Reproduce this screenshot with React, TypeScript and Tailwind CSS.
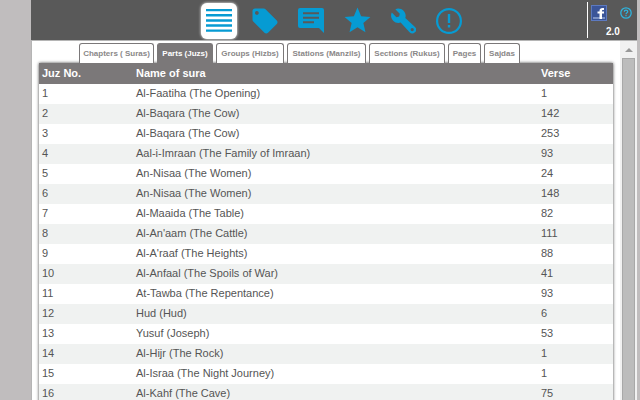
import { MdLocalOffer, MdStar } from "react-icons/md";

const tabs = [
  { label: "Chapters ( Suras)", width: "w-[75px]" },
  { label: "Parts (Juzs)", width: "w-14" },
  { label: "Groups (Hizbs)", width: "w-[68px]" },
  { label: "Stations (Manzils)", width: "w-[79px]" },
  { label: "Sections (Rukus)", width: "w-[76px]" },
  { label: "Pages", width: "w-[33px]" },
  { label: "Sajdas", width: "w-9" },
];

const juzs = [
  { sura: "Al-Faatiha (The Opening)", verse: 1 },
  { sura: "Al-Baqara (The Cow)", verse: 142 },
  { sura: "Al-Baqara (The Cow)", verse: 253 },
  { sura: "Aal-i-Imraan (The Family of Imraan)", verse: 93 },
  { sura: "An-Nisaa (The Women)", verse: 24 },
  { sura: "An-Nisaa (The Women)", verse: 148 },
  { sura: "Al-Maaida (The Table)", verse: 82 },
  { sura: "Al-An'aam (The Cattle)", verse: 111 },
  { sura: "Al-A'raaf (The Heights)", verse: 88 },
  { sura: "Al-Anfaal (The Spoils of War)", verse: 41 },
  { sura: "At-Tawba (The Repentance)", verse: 93 },
  { sura: "Hud (Hud)", verse: 6 },
  { sura: "Yusuf (Joseph)", verse: 53 },
  { sura: "Al-Hijr (The Rock)", verse: 1 },
  { sura: "Al-Israa (The Night Journey)", verse: 1 },
  { sura: "Al-Kahf (The Cave)", verse: 75 },
];

const ListIcon = () => (
  <svg viewBox="0 0 26 24" className="h-6 w-[26px]" fill="currentColor">
    <path d="M0 0h26v2.200H0zM0 5h26v2.500H0zM0 10.200h26v2.500H0zM0 15.200h26v2.500H0zM0 20.500h26v2.200H0z" />
  </svg>
);

const CommentIcon = () => (
  <svg viewBox="0 0 26 26" className="size-[26px]" fill="currentColor">
    <path
      fillRule="evenodd"
      d="M2 0h22a2 2 0 0 1 2 2v23l-5-5H2a2 2 0 0 1-2-2V2a2 2 0 0 1 2-2zM5 4.200v2h16v-2zM5 8.700v2h16v-2zM5 13.200v2h11v-2z"
    />
  </svg>
);

const WrenchIcon = () => (
  <svg viewBox="0 .6 23.400 23.400" className="size-[26px]" fill="currentColor">
    <path
      fillRule="evenodd"
      d="M22.500 17.600l-8.700-7.900c.7-2.300.2-4.900-1.600-6.700-2-2-5-2.400-7.400-1.300L8.800 5.800 8.200 8.200 5.800 8.900 1.600 4.700C.4 7.100.9 10.100 2.900 12.100c1.900 1.900 4.400 2.400 6.700 1.600l8 8.700a3.400 3.400 0 1 0 4.900-4.800zM20 18.500a1.500 1.500 0 1 1 0 3 1.500 1.500 0 0 1 0-3z"
    />
  </svg>
);

const AlertIcon = () => (
  <svg viewBox="0 0 26 26" className="size-[26px]" fill="none" stroke="currentColor">
    <circle cx="13" cy="13" r="11.900" strokeWidth="2.200" />
    <path d="M13 6v9M13 17v2.500" strokeWidth="2.400" />
  </svg>
);

const FacebookIcon = () => (
  <svg viewBox="0 0 16 16" className="size-4">
    <path d="M0 0h16v16H0z" fill="#5d7ac0" />
    <path d="M1 1h14v14H1z" fill="#3b5598" />
    <path d="M2 12h12v2H2z" fill="#7c92c4" />
    <path
      d="M8.500 14V8.500h-2v-2h2V6c0-2.200 1.200-3 3-3H13v2h-1c-.8 0-1 .300-1 1v.5h2v2h-2V14z"
      fill="#fff"
    />
  </svg>
);

const HelpIcon = () => (
  <svg viewBox="0 0 12 12" className="size-3" fill="none" stroke="#2fb4de">
    <circle cx="6" cy="6" r="5.200" strokeWidth="1.300" />
    <path d="M4.300 4.700c0-2.200 3.400-2.200 3.400 0C7.700 5.800 6 5.800 6 7.200M6 8v1.300" strokeWidth="1.200" />
  </svg>
);

const Header = () => {
  return (
    <header className="flex h-10 bg-[#595959] text-[#069bd3]">
      <nav className="flex flex-1 items-center justify-center gap-[10px] pt-px pl-[50px]">
        <button
          aria-label="Index"
          className="flex size-9 items-center justify-center rounded-md bg-white shadow-[0_0_3px_#fff]"
        >
          <ListIcon />
        </button>
        <button aria-label="Tags" className="flex size-9 items-center justify-center">
          <MdLocalOffer size={30} />
        </button>
        <button aria-label="Comments" className="flex size-9 items-center justify-center">
          <CommentIcon />
        </button>
        <button aria-label="Favorites" className="flex size-9 items-center justify-center">
          <MdStar size={31} />
        </button>
        <button aria-label="Settings" className="flex size-9 items-center justify-center">
          <WrenchIcon />
        </button>
        <button aria-label="About" className="flex size-9 items-center justify-center">
          <AlertIcon />
        </button>
      </nav>
      <div className="my-[2px] w-[50px] border-l border-white pr-[5px] pt-[3px] pl-[3px]">
        <div className="flex items-center justify-between">
          <a href="#facebook" aria-label="Facebook">
            <FacebookIcon />
          </a>
          <a href="#help" aria-label="Help">
            <HelpIcon />
          </a>
        </div>
        <p className="mt-1 pl-[15px] text-[10px] leading-[14px] font-bold text-white">2.0</p>
      </div>
    </header>
  );
};

const App = () => {
  return (
    <div className="flex h-screen overflow-hidden bg-[#c0bdbe] pl-[31px] pr-[3px] font-['Liberation_Sans',Arial,sans-serif]">
      <div className="flex min-w-0 flex-1 flex-col">
        <Header />
        <div className="flex min-h-0 flex-1 border-t border-l border-[#b5b5b5] bg-white">
          <main className="min-w-0 flex-1 overflow-hidden px-[7px] pt-[2px]">
            <div className="flex gap-[3px] pl-10">
              {tabs.map((tab, i) => (
                <button
                  key={tab.label}
                  className={`flex h-5 items-center justify-center rounded-t-[3px] border border-b-0 border-[#7b7879] text-[8px] font-bold whitespace-nowrap ${tab.width} ${
                    i === 1 ? "bg-[#7b7879] text-white" : "bg-white text-[#8a8788]"
                  }`}
                >
                  {tab.label}
                </button>
              ))}
            </div>
            <table className="w-full table-fixed border-collapse text-left text-[11px] leading-4 text-[#555] shadow-[0_0_3px_#444]">
              <thead className="bg-[#7b7879] text-white">
                <tr className="h-[21px]">
                  <th className="w-[94px] p-0 pb-[2px] pl-[3px]">Juz No.</th>
                  <th className="p-0 pb-[2px] pl-[3px]">Name of sura</th>
                  <th className="w-[75px] p-0 pb-[2px] pl-[3px]">Verse</th>
                </tr>
              </thead>
              <tbody>
                {juzs.map((juz, i) => (
                  <tr key={i} className="h-5 bg-white even:bg-[#f0f2f1]">
                    <td className="p-0 pb-[2px] pl-[3px]">{i + 1}</td>
                    <td className="p-0 pb-[2px] pl-[3px]">{juz.sura}</td>
                    <td className="p-0 pb-[2px] pl-[3px]">{juz.verse}</td>
                  </tr>
                ))}
              </tbody>
            </table>
          </main>
          <div className="flex w-[17px] flex-col items-center bg-[#f1f1f1]">
            <svg viewBox="0 0 8 4" className="mt-[7px] mb-[6px] h-1 w-2" fill="#999">
              <path d="M4 0l4 4H0z" />
            </svg>
            <div className="w-[13px] flex-1 border border-b-0 border-[#a8a8a8] bg-[#bcbcbc]" />
          </div>
        </div>
      </div>
    </div>
  );
};

export default App;
